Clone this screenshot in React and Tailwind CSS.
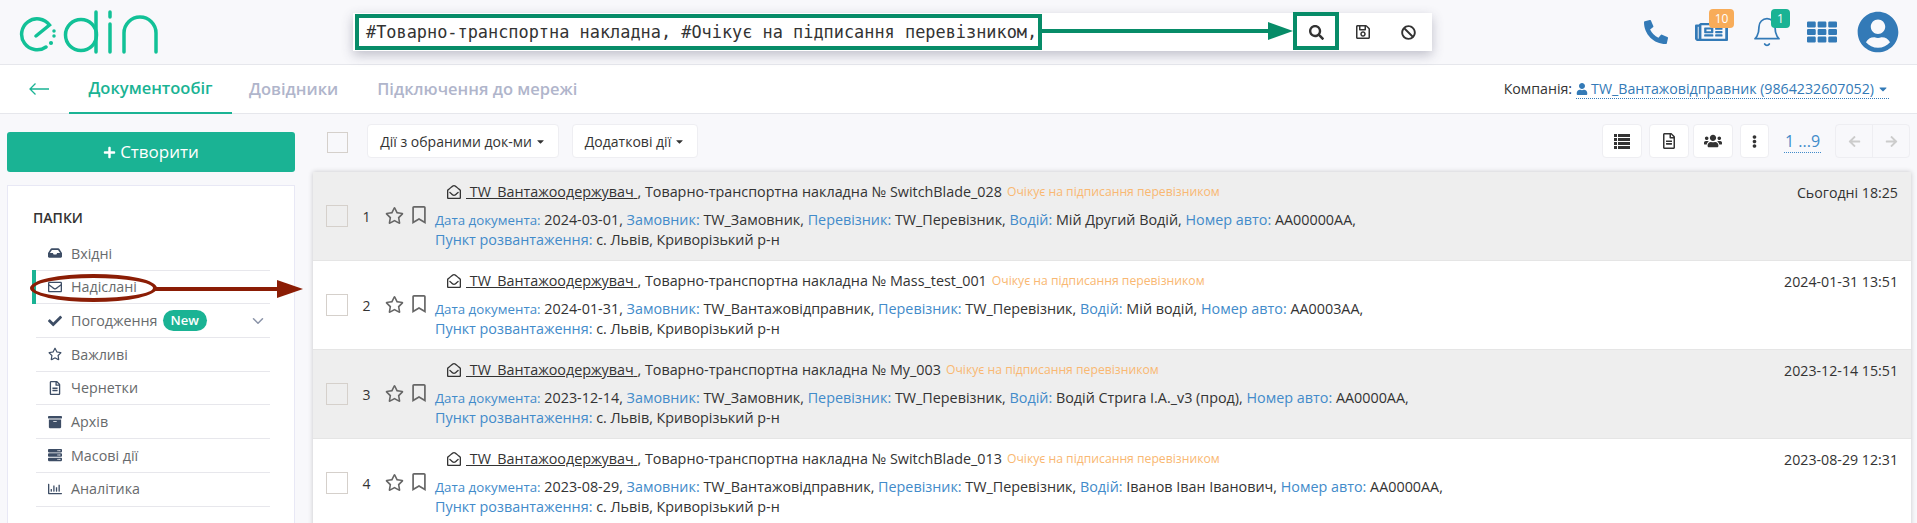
import React from 'react';
import {
  FaArchive, FaArrowLeft, FaArrowRight, FaBan, FaCheck, FaEllipsisV, FaInbox, FaPhoneAlt, FaPlus,
  FaRegBookmark, FaRegChartBar, FaRegEnvelope, FaRegEnvelopeOpen, FaRegFileAlt, FaRegNewspaper,
  FaRegSave, FaRegStar, FaSearch, FaServer, FaTh, FaUser, FaUserCircle, FaUsers, FaCaretDown,
} from 'react-icons/fa';
import { FiBell, FiChevronDown } from 'react-icons/fi';

const folders = [
  { name: 'Вхідні', icon: FaInbox },
  { name: 'Надіслані', icon: FaRegEnvelope, active: true },
  { name: 'Погодження', icon: FaCheck, badge: 'New' },
  { name: 'Важливі', icon: FaRegStar },
  { name: 'Чернетки', icon: FaRegFileAlt },
  { name: 'Архів', icon: FaArchive },
  { name: 'Масові дії', icon: FaServer },
  { name: 'Аналітика', icon: FaRegChartBar },
];

const docs = [
  { n: 1, num: 'SwitchBlade_028', date: '2024-03-01', customer: 'TW_Замовник', driver: 'Мій Другий Водій', car: 'АА00000АА', when: 'Сьогодні 18:25' },
  { n: 2, num: 'Mass_test_001', date: '2024-01-31', customer: 'TW_Вантажовідправник', driver: 'Мій водій', car: 'АА0003АА', when: '2024-01-31 13:51' },
  { n: 3, num: 'My_003', date: '2023-12-14', customer: 'TW_Замовник', driver: 'Водій Стрига І.А._v3 (прод)', car: 'АА0000АА', when: '2023-12-14 15:51' },
  { n: 4, num: 'SwitchBlade_013', date: '2023-08-29', customer: 'TW_Вантажовідправник', driver: 'Іванов Іван Іванович', car: 'АА0000АА', when: '2023-08-29 12:31' },
];

const Logo = () => (
  <svg width="140" height="46" viewBox="0 0 140 46" fill="none" stroke="#12c197" strokeWidth="3.5" strokeLinecap="round">
    <path d="M17 27 30.500 16A15.500 15.500 0 1 0 27 38" />
    <circle cx="35" cy="22" r="1" fill="#12c197" strokeWidth="1.500" />
    <circle cx="35" cy="27" r="1" fill="#12c197" strokeWidth="1.500" />
    <circle cx="32" cy="34" r="1.300" fill="#12c197" strokeWidth="1.500" />
    <circle cx="62" cy="26" r="15.500" />
    <path d="M77 3v40" />
    <path d="M91 3v5M91 15v28" />
    <path d="M105 43V24a16 16 0 0 1 32 0v19" />
  </svg>
);

const ListIcon = () => (
  <svg width="16" height="15" viewBox="0 0 16 15" fill="currentColor">
    <path d="M0 0h3v3H0zM4 0h12v3H4zM0 4h3v3H0zM4 4h12v3H4zM0 8h3v3H0zM4 8h12v3H4zM0 12h3v3H0zM4 12h12v3H4z" />
  </svg>
);

const ToolBtn = ({ className, children }) => (
  <button className={`h-[34px] flex items-center justify-center bg-white border border-[#eeeef2] rounded text-[#333] ${className}`}>
    {children}
  </button>
);

const Field = ({ label, value, small }) => (
  <>
    <span className={`text-[#428bca] ${small ? 'text-[13.300px]' : ''}`}>{label}:</span> {value},{' '}
  </>
);

const DocRow = ({ doc }) => (
  <div className={`h-[89px] flex border-b border-[#e5e5e5] ${doc.n % 2 ? 'bg-[#eeeeee]' : 'bg-white'}`}>
    <div className="w-[122px] shrink-0 flex items-start pl-[13px] pt-[33px]">
      <div className={`w-[22px] h-[22px] border border-[#d5d0cb] ${doc.n % 2 ? 'bg-[#eeeeee]' : 'bg-white'}`} />
      <span className="w-[37px] text-center text-sm leading-[24px] text-[#333]">{doc.n}</span>
      <FaRegStar className="mt-[1px] text-[19px] text-[#666]" />
      <FaRegBookmark className="ml-[6px] mt-[1px] text-[18px] text-[#666]" />
    </div>
    <div className="flex-1 min-w-0 pt-[10px]">
      <div className="pl-[12px] text-[14.350px] leading-[20px] text-[#333] flex items-center">
        <span className="underline flex items-center whitespace-pre">
          <FaRegEnvelopeOpen className="text-[14px] mr-[5px]" /> TW_Вантажоодержувач{' '}
        </span>
        <span className="whitespace-pre">, Товарно-транспортна накладна № {doc.num}</span>
        <span className="ml-[5px] text-[12.200px] text-[#f9b872]">Очікує на підписання перевізником</span>
      </div>
      <div className="mt-[8px] text-[14.350px] leading-[20px] text-[#333]">
        <Field label="Дата документа" value={doc.date} small />
        <Field label="Замовник" value={doc.customer} />
        <Field label="Перевізник" value="TW_Перевізник" />
        <Field label="Водій" value={doc.driver} />
        <Field label="Номер авто" value={doc.car} />
      </div>
      <div className="text-[14.350px] leading-[20px] text-[#333]">
        <span className="text-[#428bca]">Пункт розвантаження:</span> с. Львів, Криворізький р-н
      </div>
    </div>
    <div className="shrink-0 pr-[13px] pt-[11px] text-[14.200px] leading-[20px] text-[#333]">{doc.when}</div>
  </div>
);

export default function App() {
  return (
    <div className="relative h-[523px] w-[1917px] overflow-hidden bg-[#f8f8fb] font-['Open_Sans','Noto_Sans',sans-serif] text-[#333]">
      {/* Шапка */}
      <header className="h-[65px] flex items-center border-b border-[#e6e7ec]">
        <div className="ml-[19px] w-[334px]"><Logo /></div>
        <div className="w-[1079px] h-[38px] flex bg-white shadow-[0_4px_12px_rgba(60,60,90,0.3)]">
          <div className="w-[939px] pl-[13px] font-['DejaVu_Sans_Mono',monospace] text-[16.900px] leading-[38px] whitespace-nowrap">
            #Товарно-транспортна накладна, #Очікує на підписання перевізником,
          </div>
          <div className="w-[46px] pl-[3px] flex items-center justify-center"><FaSearch className="text-[15px]" /></div>
          <div className="ml-[3px] w-[44px] flex items-center justify-center"><FaRegSave className="text-[16px]" /></div>
          <div className="ml-[2px] w-[43px] flex items-center justify-center"><FaBan className="text-[15px]" /></div>
        </div>
        <div className="ml-auto mr-[18px] flex items-center text-[#337ab7]">
          <FaPhoneAlt className="w-[24px] h-[24px]" />
          <div className="relative ml-[27px]">
            <FaRegNewspaper className="w-[33px] h-[24px]" preserveAspectRatio="none" />
            <span className="absolute -top-[11px] left-[14px] w-[25px] h-[19px] rounded-sm bg-[#f8ac59] text-white text-[12px] leading-[19px] text-center">10</span>
          </div>
          <div className="relative ml-[23px]">
            <FiBell className="w-[32px] h-[32px]" strokeWidth="1.300" />
            <span className="absolute -top-[7px] left-[20px] w-[19px] h-[19px] rounded-sm bg-[#1ab394] text-white text-[12px] leading-[19px] text-center">1</span>
          </div>
          <FaTh className="ml-[24px] w-[30px] h-[24px]" preserveAspectRatio="none" />
          <FaUserCircle className="ml-[20px] w-[42px] h-[42px]" />
        </div>
      </header>

      {/* Вкладки */}
      <nav className="h-[49px] flex bg-white border-b border-[#e6e7ec] text-[16.500px]">
        <div className="w-[69px] flex items-center pl-[29px] text-[#1ab394]">
          <svg width="20" height="12" viewBox="0 0 20 12" fill="none" stroke="currentColor" strokeWidth="1.300"><path d="M20 6H1M6.500 .5 1 6l5.500 5.500" /></svg>
        </div>
        <div className="w-[163px] -mb-px flex items-center justify-center border-b-[2px] border-[#1ab394] font-semibold text-[#1ab394]">Документообіг</div>
        <div className="ml-[17px] flex items-center font-semibold text-[#b0b5cb]">Довідники</div>
        <div className="ml-[39px] flex items-center font-semibold text-[#b0b5cb]">Підключення до мережі</div>
        <div className="ml-auto mr-[28px] flex items-center text-[14.200px]">
          Компанія:
          <span className="ml-[4px] flex items-center text-[#337ab7] border-b border-dotted border-[#337ab7] leading-[18px]">
            <FaUser className="text-[12px] mr-[3px]" />TW_Вантажовідправник (9864232607052)<FaCaretDown className="ml-[3px] text-[12px]" />
          </span>
        </div>
      </nav>

      <div className="flex">
        {/* Бокова панель */}
        <aside className="w-[313px] shrink-0 pl-[7px] pr-[18px] pt-[18px]">
          <button className="w-full h-[40px] flex items-center justify-center gap-[4px] rounded-[3px] bg-[#1ab394] text-white text-[17px]">
            <FaPlus className="text-[13px]" />Створити
          </button>
          <div className="mt-[13px] h-[400px] bg-white border border-[#e8e8f5] pt-[22px]">
            <div className="ml-[25px] text-[14px] font-semibold leading-[20px] text-[#333]">ПАПКИ</div>
            <ul className="mt-[9px] ml-[24px] w-[238px]">
              {folders.map((f) => (
                <li key={f.name} className="relative h-[33.700px] flex items-center border-b border-[#e7e7ec] ml-[4px] text-[14.300px] text-[#676a6c]">
                  {f.active && <span className="absolute -left-[4px] -top-px -bottom-px w-[4px] bg-[#1ab394]" />}
                  <span className="w-[35px] pl-[12px] text-[#3d4d65]"><f.icon className="text-[14px]" /></span>
                  {f.name}
                  {f.badge && <span className="ml-[5px] h-[21px] px-[8px] rounded-full bg-[#1ab394] text-white text-[13px] font-semibold leading-[21px]">{f.badge}</span>}
                  {f.badge && <FiChevronDown className="absolute right-[3px] text-[18px] text-[#8a93a8]" />}
                </li>
              ))}
            </ul>
          </div>
        </aside>

        {/* Документи */}
        <main className="flex-1 min-w-0 pr-[6px]">
          <div className="h-[58px] pb-[4px] flex items-center">
            <div className="ml-[14px] mt-[3px] w-[21px] h-[21px] border border-[#d5d0cb] bg-[#f8f8fb]" />
            <ToolBtn className="ml-[19px] w-[192px] text-[14px]">Дії з обраними док-ми<FaCaretDown className="ml-[3px] text-[11px]" /></ToolBtn>
            <ToolBtn className="ml-[13px] w-[126px] text-[14px]">Додаткові дії<FaCaretDown className="ml-[3px] text-[11px]" /></ToolBtn>
            <div className="ml-auto mr-[1px] flex items-center">
              <ToolBtn className="w-[40px]"><ListIcon /></ToolBtn>
              <ToolBtn className="ml-[7px] w-[40px]"><FaRegFileAlt className="text-[16px]" /></ToolBtn>
              <ToolBtn className="ml-[4px] w-[40px]"><FaUsers className="text-[18px]" /></ToolBtn>
              <ToolBtn className="ml-[7px] w-[29px]"><FaEllipsisV className="text-[13px]" /></ToolBtn>
              <span className="ml-[15px] w-[37px] text-center text-[16px] leading-[22px] text-[#428bca] border-b border-dotted border-[#428bca]">1 ...9</span>
              <div className="ml-[14px] flex h-[34px] w-[75px] border border-[#eeeef2] rounded text-[#ccc]">
                <span className="flex-1 flex items-center justify-center border-r border-[#eeeef2]"><FaArrowLeft className="text-[13px]" /></span>
                <span className="flex-1 flex items-center justify-center"><FaArrowRight className="text-[13px]" /></span>
              </div>
            </div>
          </div>
          <div className="shadow-[0_0_5px_rgba(0,0,0,0.2)]">
            {docs.map((d) => <DocRow key={d.n} doc={d} />)}
          </div>
        </main>
      </div>

      {/* Анотації поверх скріншоту */}
      <div className="absolute left-[355px] top-[14px] w-[687px] h-[36px] border-[4px] border-[#078c68]" />
      <div className="absolute left-[1293px] top-[12px] w-[46px] h-[38px] border-[4px] border-[#078c68]" />
      <div className="absolute left-[1042px] top-[29px] w-[230px] h-[4px] bg-[#078c68]" />
      <svg className="absolute left-[1268px] top-[22px]" width="25" height="18"><path d="M0 0 25 9 0 18z" fill="#078c68" /></svg>
      <div className="absolute left-[30px] top-[274px] w-[127px] h-[28px] rounded-[50%] border-[4px] border-[#8b1d05]" />
      <div className="absolute left-[155px] top-[287px] w-[122px] h-[4px] bg-[#8b1d05]" />
      <svg className="absolute left-[277px] top-[280px]" width="26" height="18"><path d="M0 0 26 9 0 18z" fill="#8b1d05" /></svg>
    </div>
  );
}
